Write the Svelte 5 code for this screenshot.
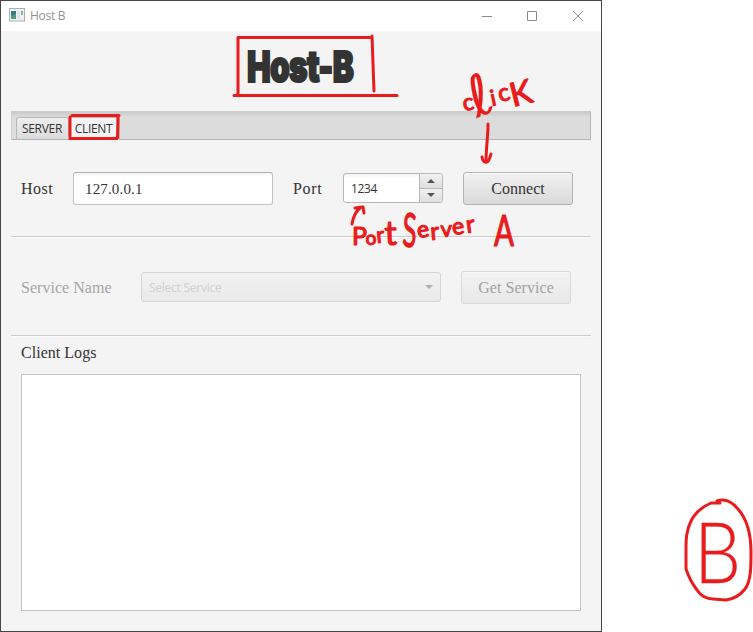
<script>
  let tab = $state('CLIENT');
  let host = $state('127.0.0.1');
  let port = $state('1234');
</script>

<div class="screen">
  <main class="window">
    <header class="titlebar">
      <svg class="appicon" width="16" height="14" viewBox="0 0 16 14">
        <rect x=".5" y=".5" width="15" height="12.5" fill="#eef1f3" stroke="#a9b0b5" />
        <rect x="2" y="3" width="5" height="8" fill="#39788a" />
        <path d="M2 11V8l5-2v5z" fill="#559a78" />
        <rect x="8" y="3" width="3" height="8" fill="#dfe3e5" />
        <rect x="12" y="3" width="2" height="4" fill="#86b8a0" />
      </svg>
      <span class="caption">Host B</span>
      <svg class="controls" width="110" height="28" viewBox="0 0 110 28" fill="none" stroke="#8b8b8b">
        <path d="M4 14.5h10M49.5 9.5h9v9h-9z" />
        <path d="m95 9 10 10M105 9 95 19" />
      </svg>
    </header>

    <div class="heading"><h1>Host-B</h1></div>

    <nav class="tabs">
      <button class:active={tab === 'SERVER'} onclick={() => (tab = 'SERVER')}>SERVER</button>
      <button class:active={tab === 'CLIENT'} onclick={() => (tab = 'CLIENT')}>CLIENT</button>
    </nav>

    <section class="row connection">
      <span class="label host">Host</span>
      <input class="hostfield" bind:value={host} aria-label="Host" />
      <span class="label port">Port</span>
      <div class="spinner">
        <input bind:value={port} aria-label="Port" />
        <div class="steps">
          <button aria-label="Increase"><svg width="8" height="4"><path d="M0 4 4 0l4 4z" /></svg></button>
          <button aria-label="Decrease"><svg width="8" height="4"><path d="m0 0 4 4 4-4z" /></svg></button>
        </div>
      </div>
      <button class="action connect">Connect</button>
    </section>

    <section class="row service">
      <span class="label name">Service Name</span>
      <div class="combo">
        <span>Select Service</span>
        <svg width="8" height="4"><path d="m0 0 4 4 4-4z" /></svg>
      </div>
      <button class="action get" disabled>Get Service</button>
    </section>

    <section class="logs">
      <div class="label">Client Logs</div>
      <div class="output"></div>
    </section>
  </main>

  <svg class="ink" width="753" height="632" viewBox="0 0 753 632">
    <g class="stroke">
      <path d="M238 37.5H372M238 38V94M372 36l2 55M234 95.500H397" />
      <path d="M72 115.500H119M70 117v19M118 116l-.5 22M70 138.500H117" />
      <path d="M488 124c0 13-2 24-2 38M482 157c1 6 6 8 8 0l1-3" />
      <path d="M352 224c1-7 4-13 9-17M355 208l8-1 1 6" />
      <path d="M720 503h-9c-9 4-16 10-20 18-5 10-5 19-5 28v20q4 12 11 21 6 9 16 9l13 1c9-1 15-6 19-11 6-8 6-22 6-37 0-22-6-35-13-43q-10-12-21-8" />
    </g>
    <text class="hand" x="464 477 492 500 513" y="111 118 106 102 107" rotate="-10 -24 -12 -14 -14"><tspan font-size="23">c</tspan><tspan class="loop" font-size="56">ℓ</tspan><tspan font-size="22">i</tspan><tspan font-size="24">c</tspan><tspan font-size="33">K</tspan></text>
    <text class="hand" x="352 366 377 385" y="245 245 243 245" rotate="0 -4 -6 -2"><tspan font-size="25">P</tspan><tspan font-size="19">o</tspan><tspan font-size="22">r</tspan><tspan font-size="34">t</tspan></text>
    <text class="hand" x="402 418 431 441 453 467" y="246 238 240 237 235 233" rotate="4 -8 -5 -3 -8 -8"><tspan font-size="47" textLength="14" lengthAdjust="spacingAndGlyphs">S</tspan><tspan font-size="23">e</tspan><tspan font-size="24">r</tspan><tspan font-size="22">v</tspan><tspan font-size="23">e</tspan><tspan font-size="24">r</tspan></text>
    <text class="hand" x="494" y="246" font-size="42" textLength="20" lengthAdjust="spacingAndGlyphs">A</text>
    <text class="hand large" x="694" y="583" font-size="85" textLength="47" lengthAdjust="spacingAndGlyphs">B</text>
  </svg>
</div>

<style>
  :global(body) { background: #fff; }
  .screen { position: relative; width: 753px; height: 632px; overflow: hidden; color: #333; font: 12px "Open Sans", "Noto Sans", sans-serif; }
  * { box-sizing: border-box; }
  button, input { font: inherit; color: inherit; margin: 0; padding: 0; }
  .window { width: 602px; height: 632px; border: 1px solid #464646; background: #f4f4f4; display: flex; flex-direction: column; }
  .titlebar { height: 30px; flex: none; background: #fff; display: flex; align-items: center; padding-left: 8px; }
  .appicon { margin-bottom: 2px; }
  .caption { margin-left: 5px; margin-bottom: 1px; color: #929292; letter-spacing: -.3px; }
  .controls { margin-left: auto; margin-right: 13px; margin-bottom: 1px; }
  .heading { height: 80px; display: flex; justify-content: center; align-items: flex-start; padding-top: 8px; }
  h1 { margin: 0 1px 0 0; font: 900 43px/54px Inter, sans-serif; letter-spacing: -1px; transform: scaleX(.735); white-space: nowrap; -webkit-text-stroke: 2px #333; }
  .tabs { height: 29px; flex: none; margin: 0 10px; padding: 5px 5px 0 4px; display: flex; background: linear-gradient(#cacaca, #dcdcdc 5px); border: 1px solid #b5b5b5; border-top-color: #ccc; border-left-color: #d0d0d0; }
  .tabs button { width: 53px; height: 22px; padding-right: 1px; border: 1px solid #b8b8b8; border-bottom: 0; border-radius: 3px 3px 0 0; background: linear-gradient(#eee, #dcdcdc); letter-spacing: -.3px; line-height: 21px; }
  .tabs button.active { width: 51px; height: 23px; padding: 0 2px 2px 0; background: #f4f4f4; }
  .row { display: flex; align-items: flex-start; margin: 0 10px; padding-left: 10px; border-bottom: 1px solid #ccc; box-shadow: 0 1px #fafafa; }
  .connection { height: 97px; padding-top: 32px; }
  .label { font: 16px/34px "Liberation Serif", serif; letter-spacing: .03px; white-space: nowrap; }
  .host { width: 52px; letter-spacing: .5px; }
  .hostfield { width: 200px; height: 33px; padding: 3px 11px 1px; border: 1px solid #c2c2c2; border-top-color: #b2b2b2; border-radius: 3px; background: linear-gradient(#f3f3f3, #fff 4px); font: 15px "Liberation Serif", serif; letter-spacing: .15px; }
  .port { width: 50px; margin-left: 20px; letter-spacing: .7px; }
  .spinner { width: 100px; height: 30px; margin-top: 1px; border: 1px solid #b8b8b8; border-radius: 3px; display: flex; background: linear-gradient(#f3f3f3, #fff 4px); overflow: hidden; }
  .spinner input { width: 75px; border: 0; background: transparent; padding-left: 7px; letter-spacing: -.4px; }
  .steps { width: 23px; display: flex; flex-direction: column; border-left: 1px solid #b8b8b8; }
  .steps button { flex: 1; border: 0; display: grid; place-items: center; background: linear-gradient(#f1f1f1, #dfdfdf); }
  .steps button + button { border-top: 1px solid #b8b8b8; }
  .steps svg { fill: #555; }
  .action { width: 110px; height: 33px; padding-top: 1px; border: 1px solid #b4b4b4; border-radius: 3px; background: linear-gradient(#f1f1f1, #dadada); box-shadow: inset 0 1px #f9f9f9; font: 16px "Liberation Serif", serif; letter-spacing: .05px; }
  .connect { margin-left: 20px; }
  .service { height: 99px; padding-top: 34px; }
  .name { width: 120px; color: #a6a6a6; }
  .combo { width: 300px; height: 30px; margin-top: 1px; border: 1px solid #d6d6d6; border-radius: 3px; background: linear-gradient(#f2f2f2, #e9e9e9); padding: 0 7px; display: flex; align-items: center; justify-content: space-between; color: #d0d0d0; letter-spacing: -.25px; }
  .combo svg { fill: #b0b0b0; }
  .get { margin-left: 20px; border-color: #d9d9d9; background: linear-gradient(#f3f3f3, #e8e8e8); color: #a2a2a2; }
  .logs { margin: 0 20px; }
  .output { width: 560px; height: 237px; margin-top: 4px; background: #fff; border: 1px solid #c5c5c5; }
  .ink { position: absolute; inset: 0; pointer-events: none; }
  .stroke { fill: none; stroke: #e81c1c; stroke-width: 3; stroke-linecap: round; stroke-linejoin: round; }
  .hand { fill: #e81c1c; stroke: #e81c1c; stroke-width: 1.2; stroke-linejoin: round; font-family: Lato, "Open Sans", sans-serif; font-weight: 400; }
  .loop { font-family: "DejaVu Sans", sans-serif; stroke-width: .2; }
  .large { font-weight: 300; stroke-width: .3; }
</style>
